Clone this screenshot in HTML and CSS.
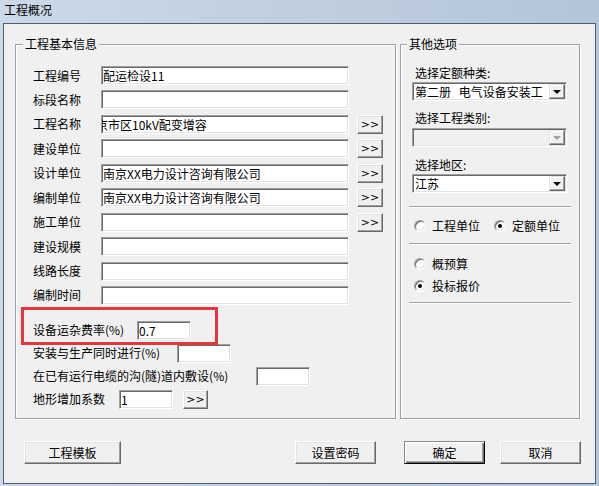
FILE: index.html
```html
<!DOCTYPE html>
<html lang="zh-CN">
<head>
<meta charset="utf-8">
<title>工程概况</title>
<link rel="stylesheet" href="styles.css">
</head>
<body>
<div class="window">
  <div class="titlebar">工程概况</div>
  <div class="client">
    <div class="groups">
      <div class="group group-main">
        <span class="group-title">工程基本信息</span>
        <div class="fields">
          <div class="row"><span class="lbl">工程编号</span><div class="field">配运检设11</div></div>
          <div class="row"><span class="lbl">标段名称</span><div class="field"></div></div>
          <div class="row"><span class="lbl">工程名称</span><div class="field field-scrolled">南京市区10kV配变增容</div><button class="btn more">&gt;&gt;</button></div>
          <div class="row"><span class="lbl">建设单位</span><div class="field"></div><button class="btn more">&gt;&gt;</button></div>
          <div class="row"><span class="lbl">设计单位</span><div class="field">南京XX电力设计咨询有限公司</div><button class="btn more">&gt;&gt;</button></div>
          <div class="row"><span class="lbl">编制单位</span><div class="field">南京XX电力设计咨询有限公司</div><button class="btn more">&gt;&gt;</button></div>
          <div class="row"><span class="lbl">施工单位</span><div class="field"></div><button class="btn more">&gt;&gt;</button></div>
          <div class="row"><span class="lbl">建设规模</span><div class="field"></div></div>
          <div class="row"><span class="lbl">线路长度</span><div class="field"></div></div>
          <div class="row"><span class="lbl">编制时间</span><div class="field"></div></div>
        </div>
        <div class="extras">
          <div class="row"><span class="lbl lbl-fee">设备运杂费率(%)</span><div class="field field-sm">0.7</div></div>
          <div class="row"><span class="lbl lbl-sim">安装与生产同时进行(%)</span><div class="field field-sm"></div></div>
          <div class="row"><span class="lbl lbl-cable">在已有运行电缆的沟(隧)道内敷设(%)</span><div class="field field-sm"></div></div>
          <div class="row"><span class="lbl lbl-terrain">地形增加系数</span><div class="field field-sm">1</div><button class="btn more more-sm">&gt;&gt;</button></div>
        </div>
        <div class="highlight"></div>
      </div>
      <div class="group group-opts">
        <span class="group-title group-title-opts">其他选项</span>
        <span class="opt-label">选择定额种类:</span>
        <div class="select select-1"><span class="select-text select-text-wide">第二册 电气设备安装工</span><span class="select-btn"><span class="arrow"></span></span></div>
        <span class="opt-label opt-label-2">选择工程类别:</span>
        <div class="select select-2 disabled"><span class="select-text"></span><span class="select-btn"><span class="arrow"></span></span></div>
        <span class="opt-label opt-label-3">选择地区:</span>
        <div class="select select-3"><span class="select-text">江苏</span><span class="select-btn"><span class="arrow"></span></span></div>
        <div class="sep sep-1"></div>
        <div class="radio-row radio-row-1">
          <span class="radio-opt"><span class="radio"></span>工程单位</span>
          <span class="radio-opt"><span class="radio on"></span>定额单位</span>
        </div>
        <div class="sep sep-2"></div>
        <div class="radio-row radio-row-2">
          <span class="radio-opt"><span class="radio"></span>概预算</span>
        </div>
        <div class="radio-row radio-row-3">
          <span class="radio-opt"><span class="radio on"></span>投标报价</span>
        </div>
        <div class="sep sep-3"></div>
      </div>
    </div>
    <div class="actions">
      <button class="btn btn-lg">工程模板</button>
      <button class="btn btn-md btn-push">设置密码</button>
      <button class="btn btn-md btn-default">确定</button>
      <button class="btn btn-md btn-cancel">取消</button>
    </div>
  </div>
</div>
</body>
</html>
```
FILE: styles.css
```css
* { box-sizing: border-box; }
html, body { margin: 0; padding: 0; }
body {
  width: 599px;
  height: 486px;
  overflow: hidden;
  font-family: "Noto Sans CJK SC", "Noto Sans", sans-serif;
  font-size: 12px;
  line-height: 14px;
  color: #000;
  background: #c5d4e3;
}
.window {
  width: 599px;
  height: 486px;
  display: flex;
  flex-direction: column;
  background: linear-gradient(to right, #ccd9e8, #b3c5d8);
}
.titlebar {
  flex: none;
  height: 23px;
  padding: 0 0 3px 4px;
  display: flex;
  align-items: center;
}
.client {
  flex: none;
  height: 461px;
  margin: 0 3px;
  border: 1px solid #4e5e70;
  background: #f0f0f0;
  padding: 20px 14px 0 11px;
}
.groups {
  display: flex;
  gap: 4px;
  height: 375px;
}
.group {
  position: relative;
  border: 1px solid #a0a0a0;
  box-shadow: inset 1px 1px 0 #fff, 1px 1px 0 #fff;
}
.group-title {
  position: absolute;
  top: -8px;
  left: 7px;
  padding: 0 2px;
  background: #f0f0f0;
  line-height: 14px;
}
.group-title-opts { left: 6px; }

/* main group */
.group-main {
  width: 381px;
  padding: 21px 0 0 17px;
}
.fields {
  display: flex;
  flex-direction: column;
  gap: 5.44px;
}
.row {
  display: flex;
  align-items: center;
  height: 19px;
}
.lbl {
  width: 68px;
  flex: none;
  white-space: nowrap;
}
.field {
  flex: none;
  width: 248px;
  height: 19px;
  background: #fff;
  border: 1px solid;
  border-color: #a0a0a0 #fff #fff #a0a0a0;
  box-shadow: inset 1px 1px 0 #696969, inset -1px -1px 0 #e3e3e3;
  padding: 1px 1px 0 1px;
  line-height: 16px;
  white-space: nowrap;
  overflow: hidden;
}
.field-scrolled { text-indent: -19px; }
.btn {
  font: inherit;
  color: #000;
  background: #f0f0f0;
  border: 1px solid;
  border-color: #fff #696969 #696969 #fff;
  box-shadow: inset -1px -1px 0 #a0a0a0, inset 1px 1px 0 #e3e3e3;
  padding: 0;
  margin: 0;
  line-height: 14px;
}
.more {
  flex: none;
  width: 26px;
  height: 19px;
  margin-left: 8px;
  font-family: "DejaVu Sans", sans-serif;
  font-size: 11px;
  line-height: 15px;
}
.more-sm { width: 25px; margin-left: 10px; }
.extras {
  display: flex;
  flex-direction: column;
  gap: 4px;
  margin-top: 16px;
}
.field-sm { width: 54px; }
.lbl-fee { width: 104px; }
.lbl-sim { width: 144px; }
.lbl-cable { width: 223px; }
.lbl-terrain { width: 86px; }
.highlight {
  position: absolute;
  left: 5px;
  top: 262px;
  width: 197px;
  height: 38px;
  border: 3px solid #e5353d;
}

/* options group */
.group-opts {
  width: 180px;
  padding: 21px 8px 0 8px;
  display: flex;
  flex-direction: column;
}
.opt-label {
  margin-left: 6px;
  height: 14px;
  white-space: nowrap;
}
.opt-label-2 { margin-top: 10px; }
.opt-label-3 { margin-top: 11px; }
.select {
  display: flex;
  width: 155px;
  height: 19px;
  margin-left: 3px;
  background: #fff;
  border: 1px solid;
  border-color: #a0a0a0 #fff #fff #a0a0a0;
  box-shadow: inset 1px 1px 0 #696969, inset -1px -1px 0 #e3e3e3;
  padding: 1px;
}
.select-1 { margin-top: 2px; }
.select-2 { margin-top: 3px; }
.select-3 { margin-top: 2px; }
.select.disabled { background: #f0f0f0; }
.select-text {
  flex: 1;
  overflow: hidden;
  white-space: nowrap;
  padding-left: 1px;
  line-height: 15px;
}
.select-text-wide { word-spacing: 5px; }
.select-btn {
  flex: none;
  width: 16px;
  height: 15px;
  background: #f0f0f0;
  border: 1px solid;
  border-color: #e3e3e3 #696969 #696969 #e3e3e3;
  box-shadow: inset -1px -1px 0 #a0a0a0, inset 1px 1px 0 #fff;
  display: flex;
  align-items: center;
  justify-content: center;
}
.arrow {
  width: 0;
  height: 0;
  border-top: 4px solid #000;
  border-left: 4px solid transparent;
  border-right: 4px solid transparent;
  margin-top: 1px;
}
.disabled .arrow { border-top-color: #a0a0a0; }
.sep {
  height: 2px;
  border-top: 1px solid #a0a0a0;
  border-bottom: 1px solid #fff;
}
.sep-1 { margin-top: 13px; }
.sep-2 { margin-top: 10px; }
.sep-3 { margin-top: 9px; }
.radio-row {
  display: flex;
  gap: 14px;
  height: 14px;
  margin-left: 5px;
}
.radio-row-1 { margin-top: 11px; }
.radio-row-2 { margin-top: 12px; }
.radio-row-3 { margin-top: 8px; }
.radio-opt {
  display: flex;
  align-items: center;
  gap: 6px;
  white-space: nowrap;
}
.radio {
  flex: none;
  width: 12px;
  height: 12px;
  border-radius: 50%;
  background: #fff;
  border: 1px solid;
  border-color: #a0a0a0 #fff #fff #a0a0a0;
  box-shadow: inset 1px 1px 0 #696969, inset -1px -1px 0 #e3e3e3;
  display: flex;
  align-items: center;
  justify-content: center;
}
.radio.on::after {
  content: "";
  width: 4px;
  height: 4px;
  border-radius: 50%;
  background: #000;
}

/* bottom buttons */
.actions {
  display: flex;
  margin-top: 22px;
  padding-left: 9px;
}
.btn-lg { width: 97px; height: 23px; }
.btn-md { width: 81px; height: 23px; }
.btn-push { margin-left: auto; }
.btn-default {
  margin-left: 28px;
  border-color: #8a8a8a #000 #000 #8a8a8a;
  box-shadow: inset 1px 1px 0 #fff, inset -1px -1px 0 #696969, inset -2px -2px 0 #a0a0a0;
}
.btn-cancel { margin-left: 15px; }
```
